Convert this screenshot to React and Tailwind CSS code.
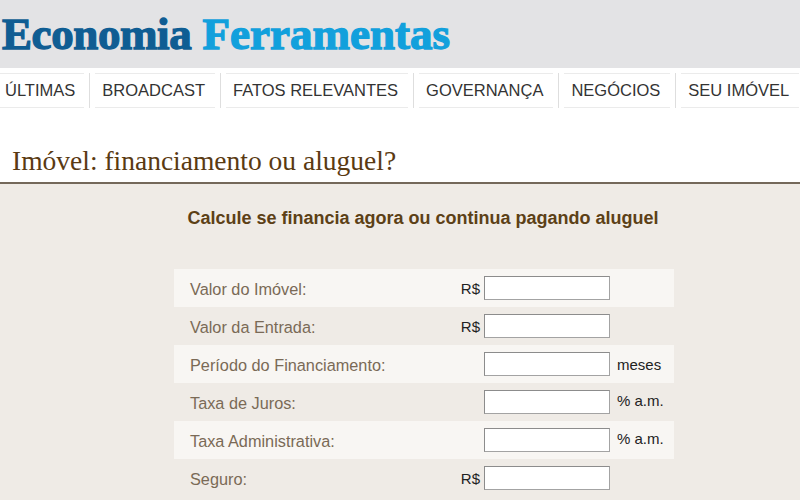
import React from 'react';

const navItems = ['ÚLTIMAS', 'BROADCAST', 'FATOS RELEVANTES', 'GOVERNANÇA', 'NEGÓCIOS', 'SEU IMÓVEL'];

const rows = [
  { label: 'Valor do Imóvel:', prefix: 'R$' },
  { label: 'Valor da Entrada:', prefix: 'R$' },
  { label: 'Período do Financiamento:', unit: 'meses' },
  { label: 'Taxa de Juros:', unit: '% a.m.', unitUp: true },
  { label: 'Taxa Administrativa:', unit: '% a.m.', unitUp: true },
  { label: 'Seguro:', prefix: 'R$' },
];

export default function App() {
  return (
    <div className="w-[800px] h-[500px] overflow-hidden bg-white font-['Liberation_Sans',Arial,sans-serif]">
      {/* logo bar */}
      <div className="h-[68px] bg-[#e3e3e5] pt-[12px] pl-[2px]">
        <div className="font-['Liberation_Serif',serif] font-bold text-[45px] leading-none whitespace-nowrap [-webkit-text-stroke:1.3px]">
          <span className="text-[#0f5d93] tracking-[-0.4px]">Economia</span>{' '}
          <span className="text-[#12a0dc]">Ferramentas</span>
        </div>
      </div>

      {/* nav */}
      <ul className="flex mt-[5px]">
        {navItems.map((item, i) => (
          <li key={item} className={`flex h-[35px] ${i > 0 ? 'border-l border-[#dedede]' : ''}`}>
            <div
              className={`flex items-center border-y border-[#ebebeb] text-[16.5px] leading-none text-[#333] whitespace-nowrap ${
                i === 0 ? 'pl-[5px] pr-[9px] mr-[5px]' : 'pl-[7px] pr-[10px] mx-[5px]'
              }`}
            >
              {item}
            </div>
          </li>
        ))}
      </ul>

      {/* title */}
      <div className="mt-[37px] pl-[12px] pb-[5px] border-b-2 border-[#74685a]">
        <h1 className="font-['Liberation_Serif',serif] text-[27.5px] leading-[32px] text-[#5a3a12]">
          Imóvel: financiamento ou aluguel?
        </h1>
      </div>

      {/* calculator */}
      <div className="bg-[#efebe6] h-full pt-[24px]">
        <h2 className="text-center font-bold text-[18px] leading-[20px] text-[#5c4016] pl-[46px]">
          Calcule se financia agora ou continua pagando aluguel
        </h2>

        <div className="ml-[174px] w-[500px] mt-[41px]">
          {rows.map((row, i) => (
            <div
              key={row.label}
              className={`flex items-center h-[38px] pl-[16px] ${i % 2 === 0 ? 'bg-[#f8f6f3]' : ''}`}
            >
              <span className="w-[270px] shrink-0 text-[16.3px] leading-none pt-[2px] text-[#7a6a56]">
                {row.label}
              </span>
              <span className="w-[20px] shrink-0 text-right text-[15px] leading-none text-[#222]">
                {row.prefix || ''}
              </span>
              <input
                type="text"
                className="ml-[4px] w-[126px] h-[24px] bg-white border border-[#a3a3a3] border-t-[#8c8c8c] border-l-[#8c8c8c] outline-none"
              />
              {row.unit && (
                <span className={`ml-[7px] text-[15px] leading-none text-[#222] ${row.unitUp ? 'mb-[4px]' : 'pt-[1px]'}`}>
                  {row.unit}
                </span>
              )}
            </div>
          ))}
        </div>
      </div>
    </div>
  );
}
